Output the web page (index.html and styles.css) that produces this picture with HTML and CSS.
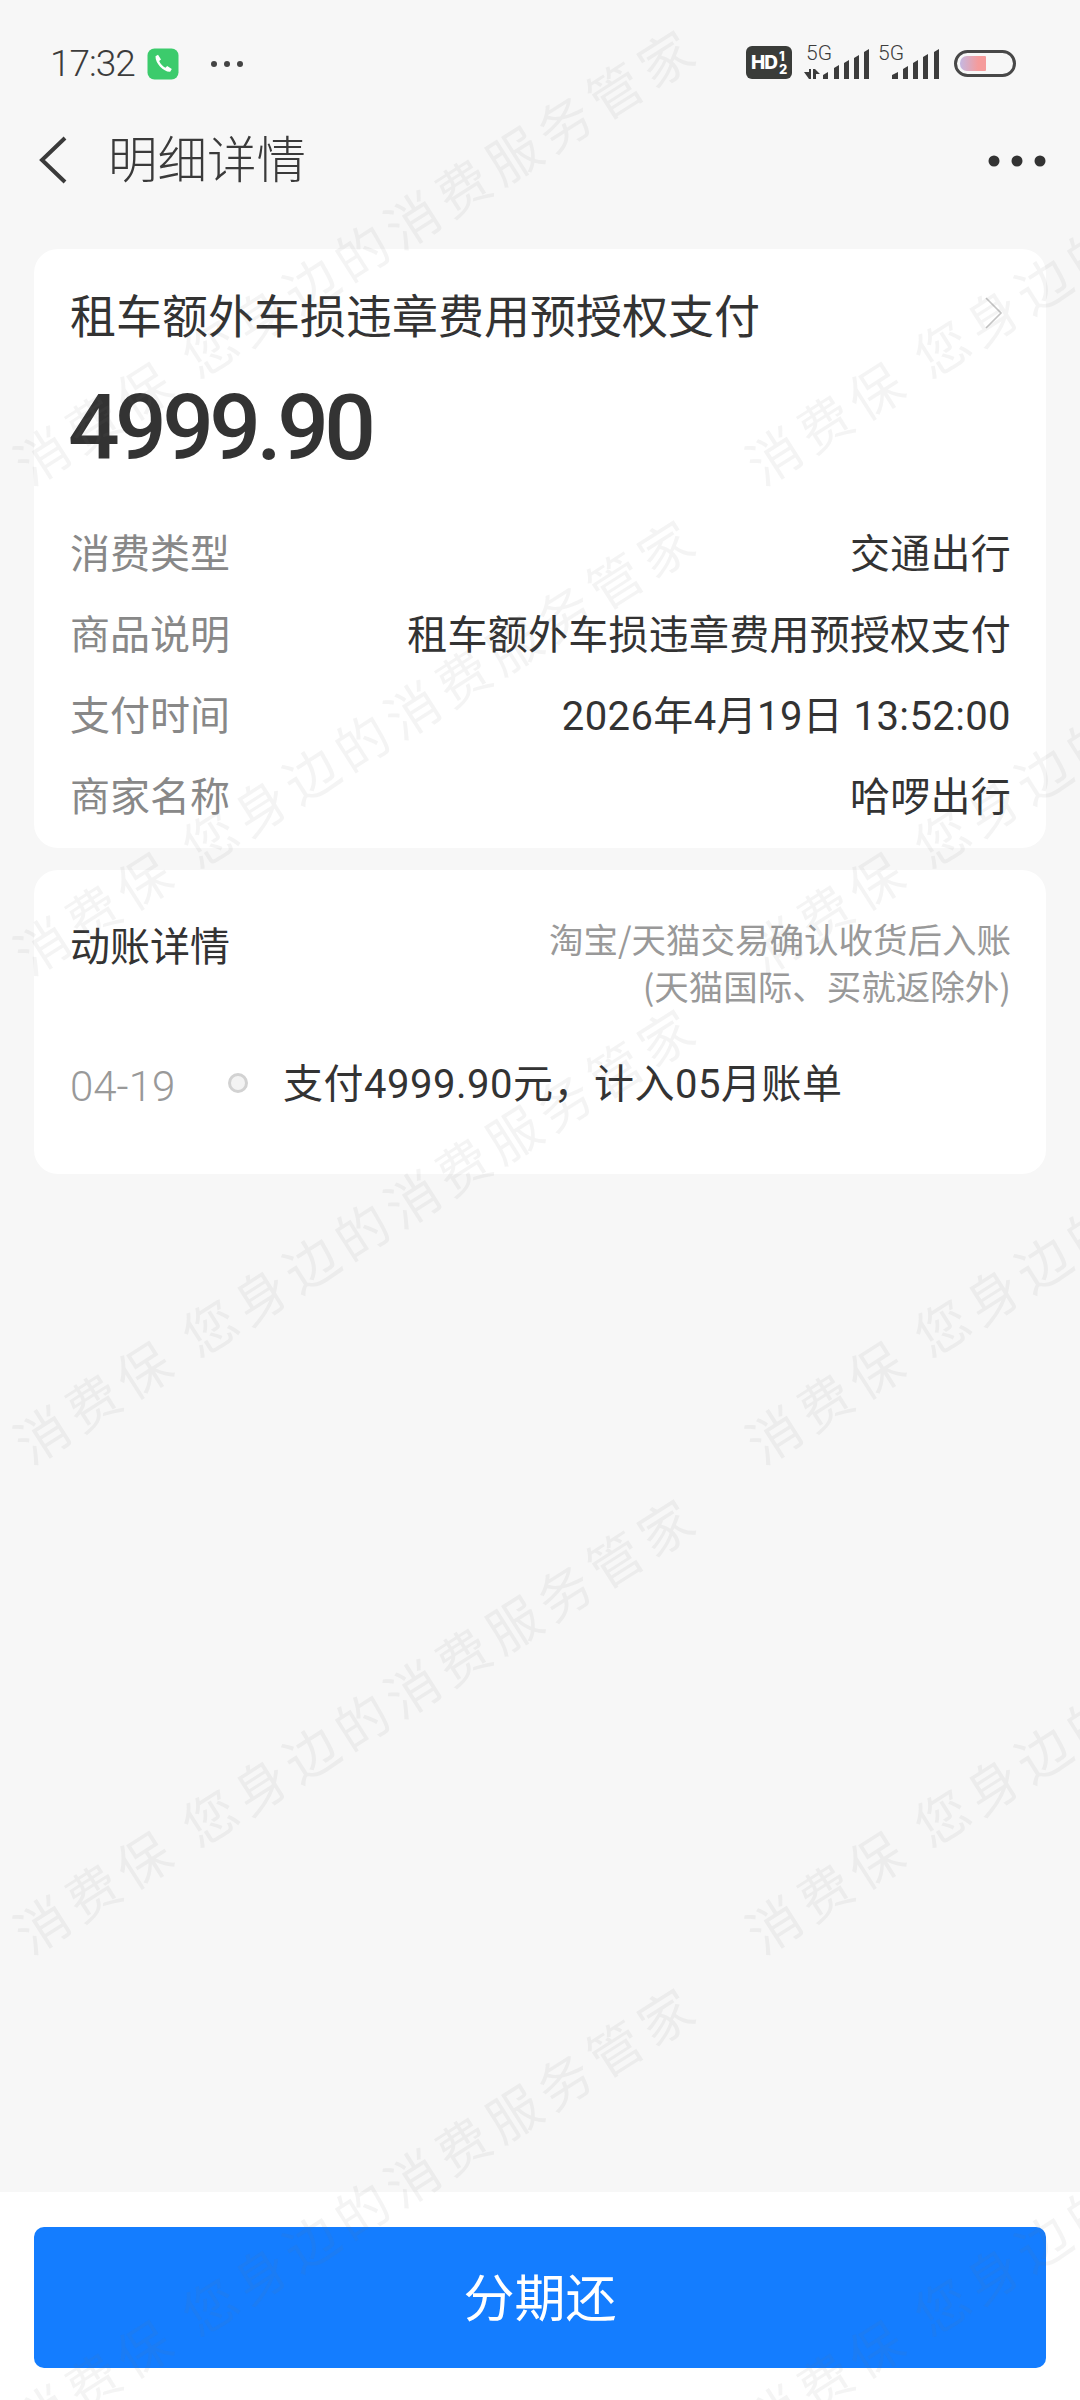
FILE: index.html
```html
<!DOCTYPE html>
<html lang="zh-CN">
<head>
<meta charset="utf-8">
<title>明细详情</title>
<link rel="stylesheet" href="styles.css">
</head>
<body>
<div class="screen">
  <header class="status">
    <div class="status-left">
      <span class="time">17:32</span>
      <svg class="phone" viewBox="0 0 32 32"><rect x="0.5" y="0.5" width="31" height="31" rx="7" fill="#3ccb6c"/><path d="M8.5 8.2 11 6.8 14 11.4 12.2 13c.9 2.6 3.5 5.4 6.2 6.7l1.8-1.6 4.6 3-1.6 2.6c-6 .6-15-8-14.7-15.5z" fill="#fff"/></svg>
      <svg class="more-small" viewBox="0 0 34 8"><circle cx="4" cy="4" r="3" fill="#444"/><circle cx="17" cy="4" r="3" fill="#444"/><circle cx="30" cy="4" r="3" fill="#444"/></svg>
    </div>
    <div class="status-right">
      <div class="hd"><b class="hd-text">HD</b><span class="hd-frac"><i>1</i><i>2</i></span></div>
      <div class="sim sim-first">
        <span class="five-g">5G</span>
        <svg viewBox="0 0 68 33"><path d="M2 26h5v-3h2v10H7zM11 23h2l5 5h-4v5h-3z" fill="#3c3c3c"/><path d="M21 29l5-3v7h-5zM32 22l5-3v14h-5zM42 17l5-3v19h-5zM52 12l5-3v24h-5zM62 6l5-3v30h-5z" fill="#3c3c3c"/></svg>
      </div>
      <div class="sim sim-second">
        <span class="five-g">5G</span>
        <svg viewBox="0 0 66 33"><path d="M18 29l6-3v7h-6zM29 23l5-3v13h-5zM39 17l5-3v19h-5zM49 11l5-3v25h-5zM60 6l5-3v30h-5z" fill="#3c3c3c"/></svg>
      </div>
      <div class="battery"><div class="battery-fill"></div></div>
    </div>
  </header>

  <nav class="nav">
    <svg class="back" viewBox="0 0 30 48"><path d="M27 2 4 24l23 22" fill="none" stroke="#3a3a3a" stroke-width="4"/></svg>
    <h1 class="nav-title">明细详情</h1>
    <svg class="more" viewBox="0 0 58 12"><circle cx="6" cy="6" r="5.5" fill="#333"/><circle cx="29" cy="6" r="5.5" fill="#333"/><circle cx="52" cy="6" r="5.5" fill="#333"/></svg>
  </nav>

  <section class="card card-main">
    <div class="head-row">
      <span class="head-title">租车额外车损违章费用预授权支付</span>
      <svg class="chev" viewBox="0 0 18 32"><path d="M1 1l15 15L1 31" fill="none" stroke="#c4c4c4" stroke-width="1.6"/></svg>
    </div>
    <div class="amount">4999.90</div>
    <div class="rows">
      <div class="row"><span class="label">消费类型</span><span class="value">交通出行</span></div>
      <div class="row"><span class="label">商品说明</span><span class="value">租车额外车损违章费用预授权支付</span></div>
      <div class="row"><span class="label">支付时间</span><span class="value value-time">2026年4月19日 13:52:00</span></div>
      <div class="row"><span class="label">商家名称</span><span class="value">哈啰出行</span></div>
    </div>
  </section>

  <section class="card card-flow">
    <div class="flow-head">
      <span class="flow-title">动账详情</span>
      <p class="flow-note">淘宝/天猫交易确认收货后入账<br>(天猫国际、买就返除外)</p>
    </div>
    <div class="flow-row">
      <span class="flow-date">04-19</span>
      <span class="flow-dot"></span>
      <span class="flow-text">支付4999.90元，计入05月账单</span>
    </div>
  </section>

  <footer class="bottom">
    <button class="pay" type="button">分期还</button>
  </footer>

  <div class="marks" aria-hidden="true">
    <span class="mark">消费保 您身边的消费服务管家</span><span class="mark">消费保 您身边的消费服务管家</span>
    <span class="mark">消费保 您身边的消费服务管家</span><span class="mark">消费保 您身边的消费服务管家</span>
    <span class="mark">消费保 您身边的消费服务管家</span><span class="mark">消费保 您身边的消费服务管家</span>
    <span class="mark">消费保 您身边的消费服务管家</span><span class="mark">消费保 您身边的消费服务管家</span>
    <span class="mark">消费保 您身边的消费服务管家</span><span class="mark">消费保 您身边的消费服务管家</span>
  </div>
</div>
</body>
</html>
```

FILE: styles.css
```css
* { box-sizing: border-box; }
html, body { margin: 0; padding: 0; }
body {
  background: #f7f7f7;
  font-family: "Noto Sans CJK SC", "Roboto", sans-serif;
  color: #333;
}
.screen {
  position: relative;
  width: 1080px;
  height: 2400px;
  overflow: hidden;
  display: flex;
  flex-direction: column;
  background: #f7f7f7;
}

/* status bar */
.status {
  height: 110px;
  padding: 46px 64px 0 50px;
  display: flex;
  justify-content: space-between;
  align-items: flex-start;
}
.status-left { display: flex; align-items: center; height: 35px; }
.time { font: 300 37px/35px "Roboto", sans-serif; letter-spacing: -1px; color: #3c3c3c; }
.phone { width: 32px; height: 32px; margin-left: 12px; }
.more-small { width: 34px; height: 8px; margin-left: 31px; }
.status-right { display: flex; align-items: flex-start; }
.hd {
  width: 46px; height: 33px;
  background: #3a3c39;
  border-radius: 6px;
  display: flex; align-items: center;
  padding-left: 5px;
  color: #fff;
}
.hd-text { font: 800 19px/1 "Inter", sans-serif; letter-spacing: -1px; }
.hd-frac { display: flex; flex-direction: column; margin-left: 2px; }
.hd-frac i { font: 800 13px/13px "Inter", sans-serif; font-style: normal; }
.sim { position: relative; height: 33px; }
.sim svg { position: absolute; left: 0; top: 0; height: 33px; }
.sim-first { width: 68px; margin-left: 10px; }
.sim-first svg { width: 68px; }
.sim-second { width: 66px; margin-left: 4px; }
.sim-second svg { width: 66px; }
.five-g { position: absolute; left: 4px; top: -3px; font: 300 21px/21px "Roboto", sans-serif; color: #3c3c3c; }
.battery {
  width: 62px; height: 27px;
  margin: 4px 0 0 14px;
  border: 3.5px solid #484848;
  border-radius: 14px;
  padding: 3px;
}
.battery-fill {
  width: 26px; height: 100%;
  border-radius: 7px 1px 1px 7px;
  background: linear-gradient(90deg, #c4b8e2, #f59b9b 70%);
}

/* nav */
.nav {
  height: 96px;
  margin-bottom: 43px;
  padding: 0 34px 0 38px;
  display: flex;
  align-items: center;
}
.back { width: 30px; height: 48px; margin-top: 4px; }
.nav-title { flex: 1; margin: -3px 0 0 40px; font-size: 49.5px; font-weight: 300; line-height: 48px; color: #3a3a3a; }
.more { width: 58px; height: 12px; margin-top: 6px; }

/* cards */
.card {
  margin: 0 34px;
  background: #fff;
  border-radius: 24px;
  padding: 0 35px 0 36px;
}
.card-main { height: 599px; }
.card-flow { height: 304px; margin-top: 22px; }

.head-row { padding-top: 29px; height: 98px; display: flex; justify-content: space-between; align-items: center; }
.head-title { font-size: 46px; line-height: 68px; color: #333; }
.chev { width: 18px; height: 32px; margin-right: 8px; }
.amount {
  font: 500 91px/91px "Roboto", sans-serif;
  letter-spacing: -4.6px;
  color: #333;
  margin: 36px 0 0 -2px;
}
.rows { margin-top: 36px; }
.row {
  height: 81px;
  display: flex;
  justify-content: space-between;
  align-items: center;
  font-size: 40px;
}
.label { color: #888; }
.value { color: #333; font-family: "Roboto", "Noto Sans CJK SC", sans-serif; letter-spacing: 0.25px; }
.value-time { letter-spacing: 0.4px; }

.flow-head { display: flex; justify-content: space-between; padding-top: 46px; }
.flow-title { font-size: 40px; line-height: 56px; color: #333; }
.flow-note { margin: -1px 0 0; text-align: right; font-size: 34.5px; line-height: 47px; color: #999; }
.flow-row { display: flex; align-items: center; margin-top: 46px; height: 60px; }
.flow-date { width: 158px; padding-top: 4px; font: 300 42px/60px "Roboto", sans-serif; color: #999; }
.flow-dot {
  width: 20px; height: 20px;
  margin-top: -4px;
  border-radius: 50%;
  border: 3px solid #d2d2d2;
  background: #f3f3f3;
}
.flow-text { margin-left: 35px; font-size: 40px; line-height: 60px; color: #333; font-family: "Roboto", "Noto Sans CJK SC", sans-serif; letter-spacing: 0.5px; }

/* bottom */
.bottom {
  margin-top: auto;
  height: 208px;
  background: #fff;
  padding: 35px 34px 0;
}
.pay {
  display: block;
  width: 100%;
  height: 141px;
  border: 0;
  border-radius: 10px;
  padding: 0 0 6px;
  background: #147dff;
  color: #fff;
  font-family: "Noto Sans CJK SC", sans-serif;
  font-size: 51px;
}

/* watermark overlay */
.marks {
  position: absolute;
  left: -11px;
  top: 8px;
  display: grid;
  grid-template-columns: repeat(2, 732px);
  grid-auto-rows: 489.5px;
  pointer-events: none;
}
.mark {
  display: flex;
  align-items: center;
  justify-content: center;
  white-space: nowrap;
  font-size: 53px;
  letter-spacing: 7px;
  color: rgba(120, 120, 120, 0.08);
  transform: rotate(-32.5deg);
}
```
